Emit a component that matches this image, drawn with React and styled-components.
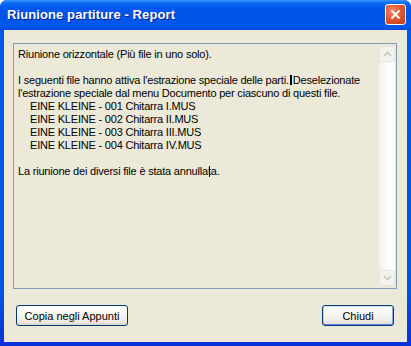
import React from "react";
import styled, { createGlobalStyle } from "styled-components";

const GlobalStyle = createGlobalStyle`
  body {
    margin: 0;
    background: #ffffff;
  }
`;

const DialogWindow = styled.div`
  width: 411px;
  height: 346px;
  box-sizing: border-box;
  display: flex;
  flex-direction: column;
  background: linear-gradient(to bottom, #0058ee 0%, #0054e3 85%, #0831d9 100%);
  border-radius: 7px 7px 0 0;
  overflow: hidden;
  font-family: "Liberation Sans", Arial, sans-serif;
`;

const TitleBar = styled.div`
  height: 30px;
  flex: 0 0 30px;
  display: flex;
  align-items: center;
  justify-content: space-between;
  padding: 0 5px 0 7px;
  box-sizing: border-box;
  background: linear-gradient(
    to bottom,
    #3d95ff 0%,
    #0a6af0 10%,
    #0058ee 25%,
    #0054e6 60%,
    #0058ee 85%,
    #0048dd 100%
  );
`;

const Title = styled.div`
  color: #ffffff;
  font-weight: bold;
  font-size: 13px;
  letter-spacing: 0.1px;
  text-shadow: 1px 1px 0 #0a1e8a;
  padding-bottom: 1px;
`;

const CloseButton = styled.div`
  width: 21px;
  height: 21px;
  box-sizing: border-box;
  border: 1px solid #ffffff;
  border-radius: 3px;
  background: radial-gradient(circle at 35% 30%, #ee8a66 0%, #e15a32 45%, #c4381a 100%);
  display: flex;
  align-items: center;
  justify-content: center;
  margin-bottom: 1px;
`;

const Client = styled.div`
  flex: 1;
  margin: 0 4px 4px 4px;
  background: #ece9d8;
  display: flex;
  flex-direction: column;
  padding: 13px 10px 0 9px;
`;

const ReportBox = styled.div`
  height: 246px;
  box-sizing: border-box;
  border: 1px solid #7f9db9;
  display: flex;
`;

const ReportText = styled.div`
  flex: 1;
  padding: 4px 4px 0 4px;
  font-size: 11px;
  line-height: 13px;
  letter-spacing: -0.2px;
  color: #000000;
`;

const Line = styled.div`
  white-space: nowrap;
  height: 13px;
  padding-left: ${(p) => (p.indent ? "12px" : "0")};
`;

const LineBreakMark = styled.span`
  display: inline-block;
  width: 2px;
  height: 10px;
  margin: 0 1px;
  background: #000000;
  vertical-align: -1px;
`;

const CaretOver = styled.span`
  position: relative;

  &::after {
    content: "";
    position: absolute;
    left: 1px;
    top: 1px;
    width: 1px;
    height: 11px;
    background: #000000;
  }
`;

const ScrollBar = styled.div`
  width: 16px;
  margin: 2px 1px 2px 0;
  display: flex;
  flex-direction: column;
  justify-content: space-between;
  background: linear-gradient(to right, #f3f1ec 0%, #fefefe 60%, #fdfdfa 100%);
`;

const ScrollArrow = styled.div`
  width: 16px;
  height: 16px;
  box-sizing: border-box;
  border: 1px solid #e8e6dc;
  border-radius: 2px;
  background: #f4f3ee;
  display: flex;
  align-items: center;
  justify-content: center;
`;

const ButtonRow = styled.div`
  display: flex;
  justify-content: space-between;
  padding: 16px 3px 0 3px;
`;

const PushButton = styled.div`
  height: 21px;
  width: ${(p) => p.width}px;
  box-sizing: border-box;
  border: 1px solid #003c74;
  border-radius: 3px;
  background: linear-gradient(to bottom, #ffffff 0%, #f6f5f1 50%, #ebe8df 85%, #d8d2c6 100%);
  box-shadow: ${(p) =>
    p.isDefault
      ? "inset 0 1px 0 #cee7ff, inset 0 -1px 0 #6982ee, inset 1px 0 0 #b8d4f7, inset -1px 0 0 #8aa8f0"
      : "none"};
  display: flex;
  align-items: center;
  justify-content: center;
  font-size: 11px;
  color: #000000;
`;

const Chevron = ({ up }) => (
  <svg width="9" height="6" viewBox="0 0 9 6">
    <path
      d={up ? "M1 5 L4.5 1.5 L8 5" : "M1 1 L4.5 4.5 L8 1"}
      fill="none"
      stroke="#c9c7ba"
      strokeWidth="1.6"
    />
  </svg>
);

const files = [
  "EINE KLEINE - 001 Chitarra I.MUS",
  "EINE KLEINE - 002 Chitarra II.MUS",
  "EINE KLEINE - 003 Chitarra III.MUS",
  "EINE KLEINE - 004 Chitarra IV.MUS",
];

export default function App() {
  return (
    <>
      <GlobalStyle />
      <DialogWindow>
        <TitleBar>
          <Title>Riunione partiture - Report</Title>
          <CloseButton>
            <svg width="11" height="11" viewBox="0 0 11 11">
              <path d="M1.5 1.5 L9.5 9.5 M9.5 1.5 L1.5 9.5" stroke="#ffffff" strokeWidth="2" />
            </svg>
          </CloseButton>
        </TitleBar>
        <Client>
          <ReportBox>
            <ReportText>
              <Line>Riunione orizzontale (Più file in uno solo).</Line>
              <Line />
              <Line>
                I seguenti file hanno attiva l'estrazione speciale delle parti.
                <LineBreakMark />
                Deselezionate
              </Line>
              <Line>l'estrazione speciale dal menu Documento per ciascuno di questi file.</Line>
              {files.map((f) => (
                <Line indent key={f}>
                  {f}
                </Line>
              ))}
              <Line />
              <Line>
                La riunione dei diversi file è stata annulla
                <CaretOver>t</CaretOver>a.
              </Line>
            </ReportText>
            <ScrollBar>
              <ScrollArrow>
                <Chevron up />
              </ScrollArrow>
              <ScrollArrow>
                <Chevron />
              </ScrollArrow>
            </ScrollBar>
          </ReportBox>
          <ButtonRow>
            <PushButton width={112}>Copia negli Appunti</PushButton>
            <PushButton width={72} isDefault>
              Chiudi
            </PushButton>
          </ButtonRow>
        </Client>
      </DialogWindow>
    </>
  );
}
